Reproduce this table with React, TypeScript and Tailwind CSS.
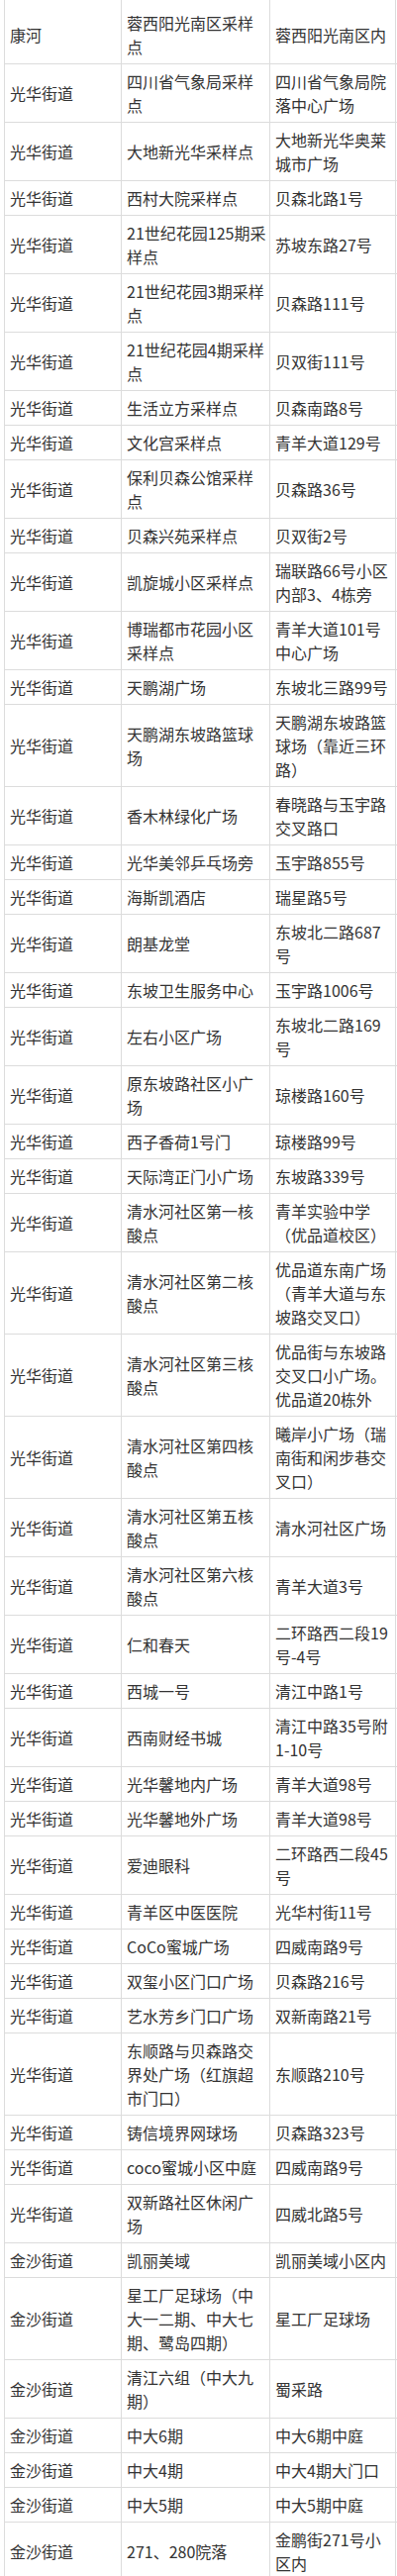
const rows: [string, string, string][] = [
  ['康河', '蓉西阳光南区采样点', '蓉西阳光南区内'],
  ['光华街道', '四川省气象局采样点', '四川省气象局院落中心广场'],
  ['光华街道', '大地新光华采样点', '大地新光华奥莱城市广场'],
  ['光华街道', '西村大院采样点', '贝森北路1号'],
  ['光华街道', '21世纪花园125期采样点', '苏坡东路27号'],
  ['光华街道', '21世纪花园3期采样点', '贝森路111号'],
  ['光华街道', '21世纪花园4期采样点', '贝双街111号'],
  ['光华街道', '生活立方采样点', '贝森南路8号'],
  ['光华街道', '文化宫采样点', '青羊大道129号'],
  ['光华街道', '保利贝森公馆采样点', '贝森路36号'],
  ['光华街道', '贝森兴苑采样点', '贝双街2号'],
  ['光华街道', '凯旋城小区采样点', '瑞联路66号小区内部3、4栋旁'],
  ['光华街道', '博瑞都市花园小区采样点', '青羊大道101号中心广场'],
  ['光华街道', '天鹏湖广场', '东坡北三路99号'],
  ['光华街道', '天鹏湖东坡路篮球场', '天鹏湖东坡路篮球场（靠近三环路）'],
  ['光华街道', '香木林绿化广场', '春晓路与玉宇路交叉路口'],
  ['光华街道', '光华美邻乒乓场旁', '玉宇路855号'],
  ['光华街道', '海斯凯酒店', '瑞星路5号'],
  ['光华街道', '朗基龙堂', '东坡北二路687号'],
  ['光华街道', '东坡卫生服务中心', '玉宇路1006号'],
  ['光华街道', '左右小区广场', '东坡北二路169号'],
  ['光华街道', '原东坡路社区小广场', '琼楼路160号'],
  ['光华街道', '西子香荷1号门', '琼楼路99号'],
  ['光华街道', '天际湾正门小广场', '东坡路339号'],
  ['光华街道', '清水河社区第一核酸点', '青羊实验中学（优品道校区）'],
  ['光华街道', '清水河社区第二核酸点', '优品道东南广场（青羊大道与东坡路交叉口）'],
  ['光华街道', '清水河社区第三核酸点', '优品街与东坡路交叉口小广场。优品道20栋外'],
  ['光华街道', '清水河社区第四核酸点', '曦岸小广场（瑞南街和闲步巷交叉口）'],
  ['光华街道', '清水河社区第五核酸点', '清水河社区广场'],
  ['光华街道', '清水河社区第六核酸点', '青羊大道3号'],
  ['光华街道', '仁和春天', '二环路西二段19号-4号'],
  ['光华街道', '西城一号', '清江中路1号'],
  ['光华街道', '西南财经书城', '清江中路35号附1-10号'],
  ['光华街道', '光华馨地内广场', '青羊大道98号'],
  ['光华街道', '光华馨地外广场', '青羊大道98号'],
  ['光华街道', '爱迪眼科', '二环路西二段45号'],
  ['光华街道', '青羊区中医医院', '光华村街11号'],
  ['光华街道', 'CoCo蜜城广场', '四威南路9号'],
  ['光华街道', '双玺小区门口广场', '贝森路216号'],
  ['光华街道', '艺水芳乡门口广场', '双新南路21号'],
  ['光华街道', '东顺路与贝森路交界处广场（红旗超市门口）', '东顺路210号'],
  ['光华街道', '铸信境界网球场', '贝森路323号'],
  ['光华街道', 'coco蜜城小区中庭', '四威南路9号'],
  ['光华街道', '双新路社区休闲广场', '四威北路5号'],
  ['金沙街道', '凯丽美域', '凯丽美域小区内'],
  ['金沙街道', '星工厂足球场（中大一二期、中大七期、鹭岛四期）', '星工厂足球场'],
  ['金沙街道', '清江六组（中大九期）', '蜀采路'],
  ['金沙街道', '中大6期', '中大6期中庭'],
  ['金沙街道', '中大4期', '中大4期大门口'],
  ['金沙街道', '中大5期', '中大5期中庭'],
  ['金沙街道', '271、280院落', '金鹏街271号小区内'],
];

const Row = ({ cells }: { cells: [string, string, string] }) => {
  const [street, site, address] = cells;
  return (
    <div className="grid grid-cols-[118px_150px_128px] border-b border-[#dcdcdc]">
      <div className="flex items-center border-l border-[#dcdcdc] py-[5px] px-[5px]">
        <p>{street}</p>
      </div>
      <div className="flex items-center border-l border-[#dcdcdc] py-[5px] pl-[5px] pr-[3px]">
        <p>{site}</p>
      </div>
      <div className="flex items-center border-x border-[#dcdcdc] py-[5px] px-[5px]">
        <p>{address}</p>
      </div>
    </div>
  );
};

export default function App() {
  return (
    <div className="w-[401px] bg-white pl-[4px] font-['Noto_Sans_CJK_SC',sans-serif] text-base leading-6 text-[#333]">
      {/* bottom of the row cut off above */}
      <div className="grid h-[6px] grid-cols-[118px_150px_128px]">
        <div className="border-l border-[#dcdcdc]" />
        <div className="border-l border-[#dcdcdc]" />
        <div className="border-x border-[#dcdcdc]" />
      </div>
      {rows.map((r, i) => (
        <Row key={i} cells={r} />
      ))}
    </div>
  );
}
